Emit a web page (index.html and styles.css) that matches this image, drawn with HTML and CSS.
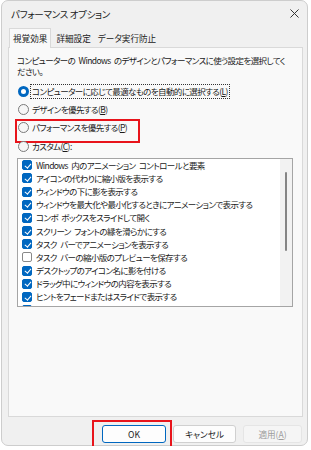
FILE: index.html
```html
<!DOCTYPE html>
<html lang="ja">
<head>
<meta charset="utf-8">
<title>パフォーマンス オプション</title>
<link rel="stylesheet" href="styles.css">
</head>
<body>
<div class="window">
  <div class="titlebar">
    <span class="title">パフォーマンス オプション</span>
    <svg class="close" viewBox="0 0 10 10" width="9" height="9"><path d="M0.5 0.5L9.5 9.5M9.5 0.5L0.5 9.5" stroke="#333" stroke-width="1.1" fill="none"/></svg>
  </div>
  <div class="tabs">
    <div class="tab active">視覚効果</div>
    <div class="tab">詳細設定</div>
    <div class="tab">データ実行防止</div>
  </div>
  <div class="panel">
    <p class="desc">コンピューターの Windows のデザインとパフォーマンスに使う設定を選択してください。</p>
    <div class="radios">
      <div class="radio checked"><span class="dot"></span><span class="lbl focus">コンピューターに応じて最適なものを自動的に選択する(<u>L</u>)</span></div>
      <div class="radio"><span class="dot"></span><span class="lbl">デザインを優先する(<u>B</u>)</span></div>
      <div class="radio marked"><span class="dot"></span><span class="lbl">パフォーマンスを優先する(<u>P</u>)</span></div>
      <div class="radio"><span class="dot"></span><span class="lbl">カスタム(<u>C</u>):</span></div>
    </div>
    <div class="listbox">
      <ul class="items">
        <li class="item"><span class="cb on"></span>Windows 内のアニメーション コントロールと要素</li>
        <li class="item"><span class="cb on"></span>アイコンの代わりに縮小版を表示する</li>
        <li class="item"><span class="cb on"></span>ウィンドウの下に影を表示する</li>
        <li class="item"><span class="cb on"></span>ウィンドウを最大化や最小化するときにアニメーションで表示する</li>
        <li class="item"><span class="cb on"></span>コンボ ボックスをスライドして開く</li>
        <li class="item"><span class="cb on"></span>スクリーン フォントの縁を滑らかにする</li>
        <li class="item"><span class="cb on"></span>タスク バーでアニメーションを表示する</li>
        <li class="item"><span class="cb"></span>タスク バーの縮小版のプレビューを保存する</li>
        <li class="item"><span class="cb on"></span>デスクトップのアイコン名に影を付ける</li>
        <li class="item"><span class="cb on"></span>ドラッグ中にウィンドウの内容を表示する</li>
        <li class="item"><span class="cb on"></span>ヒントをフェードまたはスライドで表示する</li>
        <li class="item"><span class="cb on"></span>マウス ポインターの下に影を表示する</li>
      </ul>
      <div class="scrollbar"><div class="thumb"></div></div>
    </div>
  </div>
  <div class="footer">
    <span class="hl"><button class="btn ok default">OK</button></span>
    <button class="btn cancel">キャンセル</button>
    <button class="btn apply" disabled>適用(<u>A</u>)</button>
  </div>
</div>
</body>
</html>
```

FILE: styles.css
```css
* { box-sizing: border-box; }
html, body { margin: 0; padding: 0; background: #ffffff; }
body {
  font-family: "Noto Sans CJK JP", "Noto Sans", sans-serif;
  font-size: 8.5px;
  letter-spacing: -0.6px;
  word-spacing: 2px;
  font-feature-settings: "palt";
  color: #1a1a1a;
}
.window {
  width: 307px;
  height: 446px;
  margin-left: 1px;
  background: #f0f0f0;
  border: 1px solid #cdcdcd;
  border-radius: 7px;
  display: flex;
  flex-direction: column;
}
.titlebar {
  height: 25px;
  display: flex;
  align-items: center;
  justify-content: space-between;
  padding: 0 8px 0 9px;
}
.title { font-size: 9.5px; letter-spacing: -0.3px; word-spacing: 0; color: #1a1a1a; }
.close { display: block; }
.tabs {
  display: flex;
  align-items: flex-end;
  height: 21px;
  padding-left: 7px;
  position: relative;
  z-index: 1;
  font-size: 8.6px;
  letter-spacing: 0;
}
.tab {
  height: 18px;
  line-height: 18px;
  padding: 0 3px;
  margin-right: 1px;
  color: #1a1a1a;
}
.tab.active {
  height: 20px;
  line-height: 19px;
  background: #f9f9f9;
  border: 1px solid #d9d9d9;
  border-bottom: none;
  margin-bottom: -1px;
  padding: 0 3px 0 3px;
  margin-right: 2px;
}
.panel {
  margin: 0 4px 0 6px;
  height: 370px;
  background: #f9f9f9;
  border: 1px solid #d9d9d9;
  padding: 7px 8px 0 8px;
  display: flex;
  flex-direction: column;
}
.desc {
  margin: 0;
  line-height: 11px;
  width: 273px;
}
.radios {
  margin-top: 5px;
  display: flex;
  flex-direction: column;
}
.radio {
  height: 18.4px;
  display: flex;
  align-items: center;
  gap: 2px;
  padding-left: 1px;
  position: relative;
}
.dot {
  width: 11px;
  height: 11px;
  border-radius: 50%;
  border: 1px solid #7a7a7a;
  background: #f6f6f6;
  flex: none;
}
.radio.checked .dot {
  border: 3px solid #0067c0;
  background: #ffffff;
}
.lbl { padding: 0 1px; line-height: 13px; }
.lbl.focus { outline: 1px dotted #333; outline-offset: 0; }
.radio.marked::after {
  content: "";
  position: absolute;
  left: -2px;
  top: 0;
  width: 121px;
  height: 20px;
  border: 2px solid #e8141b;
}
.listbox {
  margin-top: 2px;
  height: 149px;
  width: 276px;
  background: #ffffff;
  border: 1px solid #a5a5a5;
  display: flex;
  overflow: hidden;
}
.items {
  list-style: none;
  margin: 0;
  padding: 0 0 0 4px;
  flex: 1;
  overflow: hidden;
}
.item {
  height: 13.2px;
  line-height: 13.2px;
  display: flex;
  align-items: center;
  gap: 4px;
  white-space: nowrap;
}
.cb {
  width: 10px;
  height: 10px;
  border-radius: 2px;
  border: 1px solid #888;
  background: #fff;
  flex: none;
  position: relative;
}
.cb.on {
  background: #0067c0;
  border-color: #0067c0;
}
.cb.on::after {
  content: "";
  position: absolute;
  left: 2.5px;
  top: 0.5px;
  width: 2.5px;
  height: 5px;
  border: solid #fff;
  border-width: 0 1.2px 1.2px 0;
  transform: rotate(40deg);
}
.scrollbar {
  width: 12px;
  flex: none;
  background: #f2f2f2;
  display: flex;
  justify-content: center;
  padding-top: 13px;
}
.thumb {
  width: 2px;
  height: 79px;
  border-radius: 1px;
  background: #858585;
}
.footer {
  display: flex;
  justify-content: flex-end;
  gap: 7px;
  padding: 8px 5px 0 0;
}
.hl { position: relative; display: flex; }
.hl::after {
  content: "";
  position: absolute;
  left: -10px;
  top: -5px;
  right: -6px;
  bottom: -6px;
  border: 2px solid #e8141b;
}
.btn {
  font-family: inherit;
  font-size: 8.6px;
  letter-spacing: 0;
  font-feature-settings: "palt";
  height: 18px;
  padding: 0;
  background: #fdfdfd;
  border: 1px solid #d0d0d0;
  border-radius: 3px;
  color: #1a1a1a;
}
.btn.ok { width: 64px; }
.btn.cancel { width: 63px; }
.btn.apply { width: 59px; }
.btn.default { border-color: #0067c0; }
.btn:disabled {
  background: #f5f5f5;
  border-color: #e5e5e5;
  color: #9d9d9d;
}
```
